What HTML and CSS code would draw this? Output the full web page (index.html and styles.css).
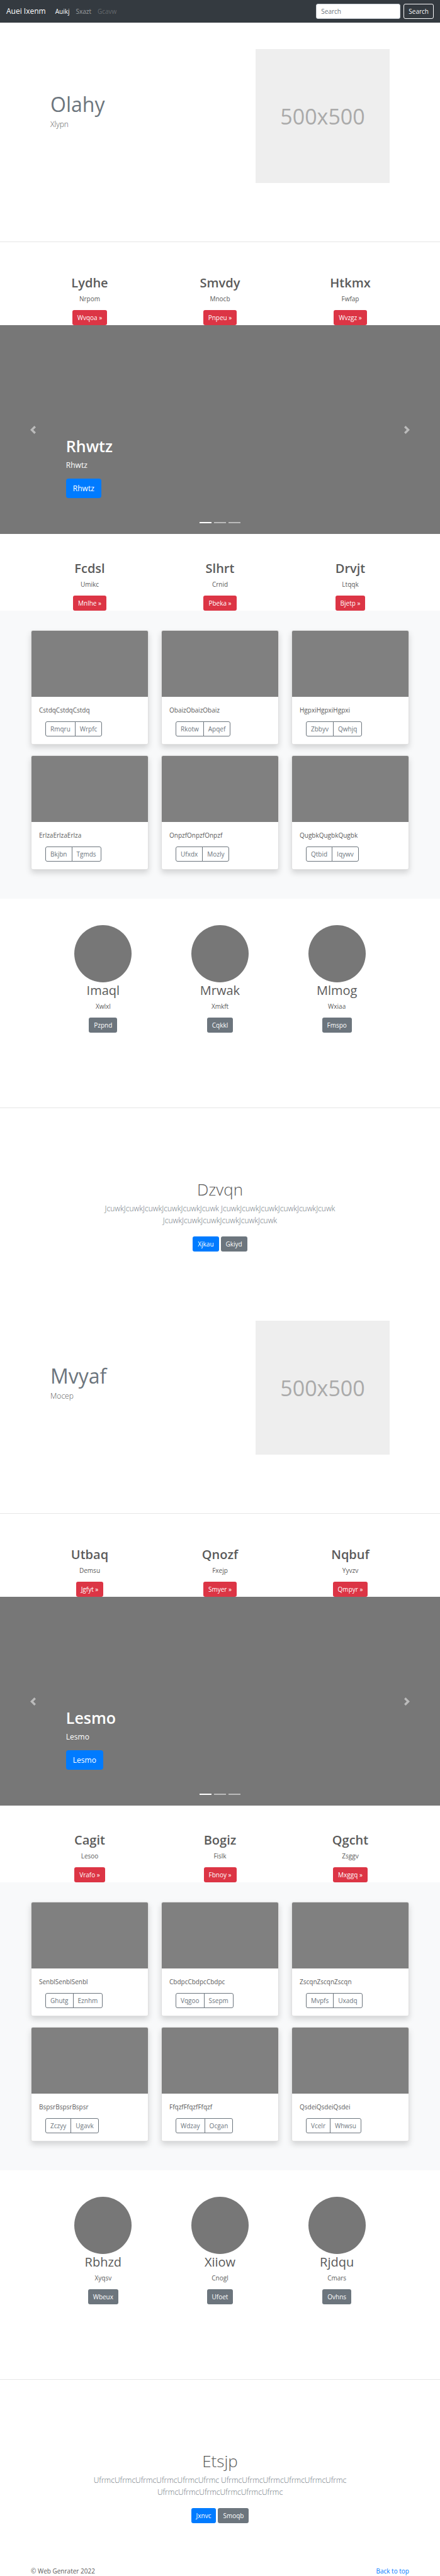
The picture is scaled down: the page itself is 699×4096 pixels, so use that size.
FILE: index.html
```html
<!DOCTYPE html>
<html lang="en">
<head>
<meta charset="utf-8">
<meta name="viewport" content="width=device-width, initial-scale=1">
<title>Auei Ixenm</title>
<link rel="stylesheet" href="styles.css">
</head>
<body>
<header class="navbar" id="top">
  <a class="brand" href="#">Auei Ixenm</a>
  <nav class="nav-links">
    <a class="nav-link active" href="#">Auikj</a>
    <a class="nav-link" href="#">Sxazt</a>
    <a class="nav-link disabled" href="#">Gcavw</a>
  </nav>
  <form class="search">
    <input class="search-input" type="search" placeholder="Search" aria-label="Search">
    <button class="btn btn-outline-light" type="button">Search</button>
  </form>
</header>
<main>
  <section class="hero">
    <div class="hero-text">
      <h1 class="hero-title">Olahy</h1>
      <p class="lead">Xlypn</p>
    </div>
    <div class="placeholder">500x500</div>
  </section>
  <hr class="divider">
  <section class="features features-tall">
    <div class="feature"><h2 class="title">Lydhe</h2><p class="text">Nrpom</p><a class="btn btn-danger" href="#">Wvqoa »</a></div>
    <div class="feature"><h2 class="title">Smvdy</h2><p class="text">Mnocb</p><a class="btn btn-danger" href="#">Pnpeu »</a></div>
    <div class="feature"><h2 class="title">Htkmx</h2><p class="text">Fwfap</p><a class="btn btn-danger" href="#">Wvzgz »</a></div>
  </section>
  <section class="carousel">
    <button class="arrow" type="button" aria-label="Previous"><svg viewBox="0 0 8 8"><path d="M5.25 0l-4 4 4 4 1.5-1.5-2.5-2.5 2.5-2.5-1.5-1.5z"/></svg></button>
    <div class="slide">
      <h2 class="slide-title">Rhwtz</h2>
      <p class="slide-text">Rhwtz</p>
      <a class="btn btn-primary btn-lg" href="#">Rhwtz</a>
      <div class="indicators"><span class="dot on"></span><span class="dot"></span><span class="dot"></span></div>
    </div>
    <button class="arrow" type="button" aria-label="Next"><svg viewBox="0 0 8 8"><path d="M2.75 0l-1.5 1.5 2.5 2.5-2.5 2.5 1.5 1.5 4-4-4-4z"/></svg></button>
  </section>
  <section class="features">
    <div class="feature"><h2 class="title">Fcdsl</h2><p class="text">Umikc</p><a class="btn btn-danger" href="#">Mnlhe »</a></div>
    <div class="feature"><h2 class="title">Slhrt</h2><p class="text">Crnid</p><a class="btn btn-danger" href="#">Pbeka »</a></div>
    <div class="feature"><h2 class="title">Drvjt</h2><p class="text">Ltqqk</p><a class="btn btn-danger" href="#">Bjetp »</a></div>
  </section>
  <section class="album">
    <article class="card"><div class="card-img"></div><div class="card-body"><p class="text">CstdqCstdqCstdq</p><div class="group"><button class="btn" type="button">Rmqru</button><button class="btn" type="button">Wrpfc</button></div></div></article>
    <article class="card"><div class="card-img"></div><div class="card-body"><p class="text">ObaizObaizObaiz</p><div class="group"><button class="btn" type="button">Rkotw</button><button class="btn" type="button">Apqef</button></div></div></article>
    <article class="card"><div class="card-img"></div><div class="card-body"><p class="text">HgpxiHgpxiHgpxi</p><div class="group"><button class="btn" type="button">Zbbyv</button><button class="btn" type="button">Qwhjq</button></div></div></article>
    <article class="card"><div class="card-img"></div><div class="card-body"><p class="text">ErlzaErlzaErlza</p><div class="group"><button class="btn" type="button">Bkjbn</button><button class="btn" type="button">Tgmds</button></div></div></article>
    <article class="card"><div class="card-img"></div><div class="card-body"><p class="text">OnpzfOnpzfOnpzf</p><div class="group"><button class="btn" type="button">Ufxdx</button><button class="btn" type="button">Mozly</button></div></div></article>
    <article class="card"><div class="card-img"></div><div class="card-body"><p class="text">QugbkQugbkQugbk</p><div class="group"><button class="btn" type="button">Qtbid</button><button class="btn" type="button">Iqywv</button></div></div></article>
  </section>
  <section class="team">
    <div class="feature"><div class="avatar"></div><h2 class="title regular">Imaql</h2><p class="text">Xwlxl</p><a class="btn btn-secondary" href="#">Pzpnd</a></div>
    <div class="feature"><div class="avatar"></div><h2 class="title regular">Mrwak</h2><p class="text">Xmkft</p><a class="btn btn-secondary" href="#">Cqkkl</a></div>
    <div class="feature"><div class="avatar"></div><h2 class="title regular">Mlmog</h2><p class="text">Wxiaa</p><a class="btn btn-secondary" href="#">Fmspo</a></div>
  </section>
  <hr class="divider">
  <section class="jumbo">
    <h1 class="jumbo-title">Dzvqn</h1>
    <p class="lead muted">JcuwkJcuwkJcuwkJcuwkJcuwkJcuwk JcuwkJcuwkJcuwkJcuwkJcuwkJcuwk JcuwkJcuwkJcuwkJcuwkJcuwkJcuwk</p>
    <div class="actions"><a class="btn btn-primary" href="#">Xjkau</a><a class="btn btn-secondary" href="#">Gkiyd</a></div>
  </section>

  <section class="hero">
    <div class="hero-text">
      <h1 class="hero-title">Mvyaf</h1>
      <p class="lead">Mocep</p>
    </div>
    <div class="placeholder">500x500</div>
  </section>
  <hr class="divider">
  <section class="features features-tall">
    <div class="feature"><h2 class="title">Utbaq</h2><p class="text">Demsu</p><a class="btn btn-danger" href="#">Jgfyt »</a></div>
    <div class="feature"><h2 class="title">Qnozf</h2><p class="text">Fxejp</p><a class="btn btn-danger" href="#">Smyer »</a></div>
    <div class="feature"><h2 class="title">Nqbuf</h2><p class="text">Yyvzv</p><a class="btn btn-danger" href="#">Qmpyr »</a></div>
  </section>
  <section class="carousel">
    <button class="arrow" type="button" aria-label="Previous"><svg viewBox="0 0 8 8"><path d="M5.25 0l-4 4 4 4 1.5-1.5-2.5-2.5 2.5-2.5-1.5-1.5z"/></svg></button>
    <div class="slide">
      <h2 class="slide-title">Lesmo</h2>
      <p class="slide-text">Lesmo</p>
      <a class="btn btn-primary btn-lg" href="#">Lesmo</a>
      <div class="indicators"><span class="dot on"></span><span class="dot"></span><span class="dot"></span></div>
    </div>
    <button class="arrow" type="button" aria-label="Next"><svg viewBox="0 0 8 8"><path d="M2.75 0l-1.5 1.5 2.5 2.5-2.5 2.5 1.5 1.5 4-4-4-4z"/></svg></button>
  </section>
  <section class="features">
    <div class="feature"><h2 class="title">Cagit</h2><p class="text">Lesoo</p><a class="btn btn-danger" href="#">Vrafo »</a></div>
    <div class="feature"><h2 class="title">Bogiz</h2><p class="text">Fislk</p><a class="btn btn-danger" href="#">Fbnoy »</a></div>
    <div class="feature"><h2 class="title">Qgcht</h2><p class="text">Zsggv</p><a class="btn btn-danger" href="#">Mxggq »</a></div>
  </section>
  <section class="album">
    <article class="card"><div class="card-img"></div><div class="card-body"><p class="text">SenblSenblSenbl</p><div class="group"><button class="btn" type="button">Ghutg</button><button class="btn" type="button">Eznhm</button></div></div></article>
    <article class="card"><div class="card-img"></div><div class="card-body"><p class="text">CbdpcCbdpcCbdpc</p><div class="group"><button class="btn" type="button">Vqgoo</button><button class="btn" type="button">Ssepm</button></div></div></article>
    <article class="card"><div class="card-img"></div><div class="card-body"><p class="text">ZscqnZscqnZscqn</p><div class="group"><button class="btn" type="button">Mvpfs</button><button class="btn" type="button">Uxadq</button></div></div></article>
    <article class="card"><div class="card-img"></div><div class="card-body"><p class="text">BspsrBspsrBspsr</p><div class="group"><button class="btn" type="button">Zczyy</button><button class="btn" type="button">Ugavk</button></div></div></article>
    <article class="card"><div class="card-img"></div><div class="card-body"><p class="text">FfqzfFfqzfFfqzf</p><div class="group"><button class="btn" type="button">Wdzay</button><button class="btn" type="button">Ocgan</button></div></div></article>
    <article class="card"><div class="card-img"></div><div class="card-body"><p class="text">QsdeiQsdeiQsdei</p><div class="group"><button class="btn" type="button">Vcelr</button><button class="btn" type="button">Whwsu</button></div></div></article>
  </section>
  <section class="team">
    <div class="feature"><div class="avatar"></div><h2 class="title regular">Rbhzd</h2><p class="text">Xyqsv</p><a class="btn btn-secondary" href="#">Wbeux</a></div>
    <div class="feature"><div class="avatar"></div><h2 class="title regular">Xiiow</h2><p class="text">Cnogl</p><a class="btn btn-secondary" href="#">Ufoet</a></div>
    <div class="feature"><div class="avatar"></div><h2 class="title regular">Rjdqu</h2><p class="text">Cmars</p><a class="btn btn-secondary" href="#">Ovhns</a></div>
  </section>
  <hr class="divider">
  <section class="jumbo">
    <h1 class="jumbo-title">Etsjp</h1>
    <p class="lead muted">UfrmcUfrmcUfrmcUfrmcUfrmcUfrmc UfrmcUfrmcUfrmcUfrmcUfrmcUfrmc UfrmcUfrmcUfrmcUfrmcUfrmcUfrmc</p>
    <div class="actions"><a class="btn btn-primary" href="#">Jxnvc</a><a class="btn btn-secondary" href="#">Smoqb</a></div>
  </section>
</main>
<footer class="footer">
  <span>© Web Genrater 2022</span>
  <a class="footer-link" href="#top">Back to top</a>
</footer>
</body>
</html>
```
FILE: styles.css
```css
* { box-sizing: border-box; }
body {
  margin: 0;
  background: #fff;
  color: #5a5a5a;
  font: 10px/16px "Open Sans", "Noto Sans", sans-serif;
}
h1, h2, p { margin: 0; }
a { text-decoration: none; }

.navbar {
  display: flex;
  align-items: center;
  height: 36px;
  padding: 0 10px;
  background: #343a40;
}
.brand { color: #fff; font-size: 12px; line-height: 20px; }
.nav-links { display: flex; gap: 10px; margin-left: 15px; }
.nav-link { color: rgba(255, 255, 255, .5); }
.nav-link.active { color: #fff; }
.nav-link.disabled { color: rgba(255, 255, 255, .25); }
.search { display: flex; gap: 5px; margin-left: auto; }
.search-input {
  width: 134px;
  height: 24px;
  padding: 0 7px;
  border: 1px solid #ced4da;
  border-radius: 3px;
  background: #fff;
  color: #495057;
  font: inherit;
}
.search-input::placeholder { color: #6c757d; opacity: 1; }

.btn {
  display: inline-block;
  height: 24px;
  padding: 0 7px;
  border: 1px solid transparent;
  border-radius: 3px;
  background: transparent;
  color: #fff;
  font: inherit;
  line-height: 22px;
  text-align: center;
  white-space: nowrap;
}
.btn-outline-light { border-color: #f8f9fa; color: #f8f9fa; }
.btn-danger { background: #dc3545; }
.btn-primary { background: #007bff; }
.btn-secondary { background: #6c757d; }
.btn-lg { height: 31px; padding: 0 10px; border-radius: 4px; font-size: 12px; line-height: 29px; }

.hero {
  display: flex;
  align-items: center;
  justify-content: space-between;
  padding: 42px 80px 93px;
}
.hero-text { padding-bottom: 18px; }
.hero-title { color: #6c757d; font-size: 32px; font-weight: 400; line-height: 44px; }
.lead { font-size: 12px; font-weight: 300; line-height: 19px; }
.muted { color: #6c757d; }
.placeholder {
  display: flex;
  align-items: center;
  justify-content: center;
  width: 213px;
  aspect-ratio: 1;
  background: #eee;
  color: #aaa;
  font-size: 34px;
}
.divider { height: 1px; margin: 0; border: 0; background: #e6e6e6; }

.features {
  display: grid;
  grid-template-columns: repeat(3, 1fr);
  gap: 20px;
  padding: 42px 49px 0;
}
.features-tall { padding-top: 52px; }
.feature { display: flex; flex-direction: column; align-items: center; }
.title { margin-bottom: 5px; font-size: 20px; font-weight: 600; line-height: 25px; }
.title.regular { font-weight: 400; }
.text { margin-bottom: 10px; }

.carousel {
  display: grid;
  grid-template-columns: 15% 1fr 15%;
  height: 332px;
  background: #777;
  color: #fff;
}
.arrow {
  display: flex;
  align-items: center;
  justify-content: center;
  padding: 0;
  border: 0;
  background: none;
  opacity: .5;
}
.arrow svg { width: 13px; height: 13px; fill: #fff; }
.slide {
  display: flex;
  flex-direction: column;
  align-items: flex-start;
  justify-content: flex-end;
  padding-bottom: 17px;
}
.slide-title { margin-bottom: 5px; font-size: 25px; font-weight: 600; line-height: 31px; }
.slide-text { margin-bottom: 12px; font-size: 12px; line-height: 19px; }
.indicators { display: flex; gap: 4px; align-self: center; margin-top: 38px; }
.dot { width: 19px; height: 2px; background: #fff; opacity: .5; }
.dot.on { opacity: 1; }

.album {
  display: grid;
  grid-template-columns: repeat(3, 1fr);
  gap: 17px 20px;
  padding: 31px 49px 46px;
  background: #f8f9fa;
}
.card {
  overflow: hidden;
  border: 1px solid #dfdfdf;
  border-radius: 3px;
  background: #fff;
  box-shadow: 0 5px 10px rgba(0, 0, 0, .15);
}
.card-img { height: 105px; background: #808080; }
.card-body { padding: 13px 12px 12px; }
.group { display: flex; padding-left: 10px; }
.group .btn { border-color: #6c757d; color: #6c757d; }
.group .btn:first-child { border-radius: 3px 0 0 3px; }
.group .btn:last-child { margin-left: -1px; border-radius: 0 3px 3px 0; }

.team {
  display: grid;
  grid-template-columns: repeat(3, 1fr);
  padding: 42px 71px 119px;
}
.avatar { width: 91px; height: 91px; border-radius: 50%; background: #777; }

.jumbo {
  display: flex;
  flex-direction: column;
  align-items: center;
  padding: 114px 140px 68px;
  text-align: center;
}
.jumbo-title { margin-bottom: 5px; font-size: 26px; font-weight: 300; line-height: 31px; }
.actions { display: flex; gap: 3px; margin-top: 16px; }

.footer {
  display: flex;
  justify-content: space-between;
  padding: 0 49px;
}
.footer-link { color: #007bff; }
```
